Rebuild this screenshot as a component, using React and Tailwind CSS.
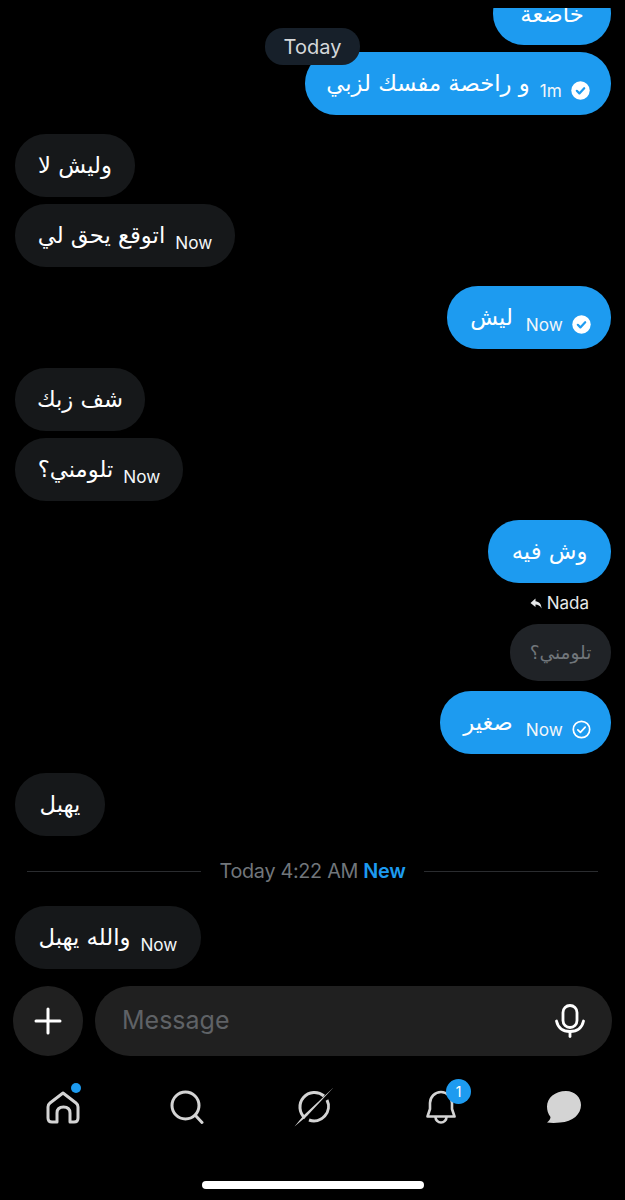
const ar = { fontFamily: '"DejaVu Sans", sans-serif' };
const la = { fontFamily: 'Inter, "Liberation Sans", sans-serif' };

function Check({ filled }) {
  if (filled)
    return (
      <svg width="19" height="19" viewBox="0 0 19 19" className="shrink-0">
        <circle cx="9.5" cy="9.5" r="9.2" fill="#fff" />
        <path d="M5.8 9.8l2.6 2.6 4.8-5.2" fill="none" stroke="#1d9bf0" strokeWidth="2.2" strokeLinecap="round" strokeLinejoin="round" />
      </svg>
    );
  return (
    <svg width="19" height="19" viewBox="0 0 19 19" className="shrink-0">
      <circle cx="9.5" cy="9.5" r="8.2" fill="none" stroke="#fff" strokeWidth="1.7" />
      <path d="M5.8 9.8l2.6 2.6 4.8-5.2" fill="none" stroke="#fff" strokeWidth="1.7" strokeLinecap="round" strokeLinejoin="round" />
    </svg>
  );
}

function Bubble({ me, text, meta, check, mt, w, wide }) {
  return (
    <div className={`flex ${me ? "justify-end pr-[14px]" : "justify-start pl-[15px]"} ${mt}`}>
      <div
        className={`h-[63px] rounded-[31px] flex items-center justify-center text-white ${w} ${wide ? "pl-[3px]" : ""} ${me ? "bg-[#1d9bf0]" : "bg-[#16181a]"}`}
      >
        <span dir="rtl" style={ar} className="text-[22.7px] leading-[30px] whitespace-nowrap -mt-[2px]">{text}</span>
        {meta && (
          <span style={la} className={`text-[17.2px] leading-[20px] mt-[14px] text-[#f2f6f9] ${wide ? "ml-[13px]" : "ml-[10px]"}`}>{meta}</span>
        )}
        {check && (
          <span className="ml-[9px] mt-[14px] flex">
            <Check filled={check === "filled"} />
          </span>
        )}
      </div>
    </div>
  );
}

function NavIcons() {
  const c = "#d4d4d4";
  return (
    <div className="flex justify-between items-center pl-[46px] pr-[43px] mt-[30px] h-[42px]">
      <div className="relative w-[34px] h-[36px]">
        <svg width="34" height="36" viewBox="0 0 34 36" fill="none" stroke={c} strokeWidth="3" strokeLinejoin="round">
          <path d="M17 4 L30 14 Q32 15.5 32 18 V29 Q32 33 28 33 H24 V24 Q24 18 17.5 18 Q11 18 11 24 V33 H6 Q2 33 2 29 V18 Q2 15.5 4 14 Z" />
        </svg>
        <span className="absolute -top-[6px] right-[-1px] w-[10px] h-[10px] rounded-full bg-[#1d9bf0]" />
      </div>
      <svg width="34" height="36" viewBox="0 0 34 36" fill="none" stroke={c} strokeWidth="3" strokeLinecap="round">
        <circle cx="15.5" cy="16.5" r="13.5" />
        <path d="M25.5 26.5 L32 33.5" />
      </svg>
      <svg width="40" height="40" viewBox="0 0 40 40" fill="none">
        <path d="M11 31 A14.5 14.5 0 0 1 30 9" stroke={c} strokeWidth="3" />
        <path d="M33 13 A14.5 14.5 0 0 1 15 33" stroke={c} strokeWidth="3" />
        <path d="M0.5 39.5 L13 29 L39.5 0.5 L24 15 L10 28 Z" fill={c} />
      </svg>
      <div className="relative w-[30px] h-[36px] ml-[2px]">
        <svg width="30" height="36" viewBox="0 0 30 36" fill="none" stroke={c} strokeWidth="2.6" strokeLinejoin="round">
          <path d="M1.5 27.5 L4 20 V14 A11 11 0 0 1 26 14 V20 L28.5 27.5 Z" />
          <path d="M9.5 28 A5.5 5.5 0 0 0 20.5 28" />
        </svg>
        <span style={la} className="absolute -top-[10px] left-[20px] w-[25px] h-[25px] rounded-full bg-[#1d9bf0] text-white text-[14px] flex items-center justify-center">1</span>
      </div>
      <svg width="36" height="34" viewBox="0 0 36 34" fill={c}>
        <path d="M20 1 C29 1 35 7.5 35 15 C35 24 27 32 14 32.5 C10 33 5 33 1 32.5 C3 31 4.5 29 4.5 27 C2 24 1 20 1 16.5 C1 8 9 1 20 1 Z" />
      </svg>
    </div>
  );
}

export default function App() {
  return (
    <div className="relative w-[625px] h-[1200px] bg-black overflow-hidden">
      <div className="flex flex-col">
        <div className="mt-[8px] h-[37px] overflow-hidden flex justify-end pr-[14px]">
          <div className="w-[118px] h-[63px] -mt-[26px] rounded-[31px] bg-[#1d9bf0] flex items-center justify-center text-white">
            <span dir="rtl" style={ar} className="text-[22.7px] leading-[30px] whitespace-nowrap">خاضعة</span>
          </div>
        </div>
        <Bubble me text="و راخصة مفسك لزبي" meta="1m" check="filled" mt="mt-[7px]" w="w-[306px]" />
        <Bubble text="وليش لا" mt="mt-[19px]" w="w-[120px]" />
        <Bubble text="اتوقع يحق لي" meta="Now" mt="mt-[7px]" w="w-[220px]" />
        <Bubble me wide text="ليش" meta="Now" check="filled" mt="mt-[19px]" w="w-[164px]" />
        <Bubble text="شف زبك" mt="mt-[19px]" w="w-[130px]" />
        <Bubble text="تلومني؟" meta="Now" mt="mt-[7px]" w="w-[168px]" />
        <Bubble me text="وش فيه" mt="mt-[19px]" w="w-[123px]" />

        <div className="flex justify-end items-center pr-[36px] mt-[10px] h-[20px] text-[#e7e9ea]">
          <svg width="12" height="11" viewBox="0 0 12 11" fill="#e7e9ea" className="mr-[5px]">
            <path d="M5.5 0.5 L0.5 5 L5.5 9 V6.5 C8 6.5 10 7.5 11.5 10.5 C11.5 6 9 3.5 5.5 3.2 Z" />
          </svg>
          <span style={la} className="text-[17px] leading-[20px]">Nada</span>
        </div>
        <div className="flex justify-end pr-[14px] mt-[11px]">
          <div className="w-[101px] h-[57px] rounded-[28px] bg-[#202327] flex items-center justify-center">
            <span dir="rtl" style={ar} className="text-[18.5px] leading-[28px] text-[#71767b]">تلومني؟</span>
          </div>
        </div>
        <Bubble me wide text="صغير" meta="Now" check="outline" mt="mt-[10px]" w="w-[171px]" />
        <Bubble text="يهبل" mt="mt-[19px]" w="w-[90px]" />

        <div className="flex items-center pl-[27px] pr-[27px] mt-[23px] h-[24px]">
          <div className="flex-1 h-px bg-[#2a2c2f]" />
          <div style={la} className="text-[19.8px] leading-[24px] px-[19px] whitespace-nowrap tracking-[-0.3px] text-[#71767b]">
            Today 4:22 AM <span className="font-semibold text-[#1d9bf0]">New</span>
          </div>
          <div className="flex-1 h-px bg-[#2a2c2f]" />
        </div>

        <Bubble text="والله يهبل" meta="Now" mt="mt-[23px]" w="w-[186px]" />

        <div className="flex items-center pl-[13px] pr-[13px] mt-[17px] gap-[12px]">
          <div className="w-[70px] h-[70px] rounded-full bg-[#202020] flex items-center justify-center shrink-0">
            <svg width="28" height="28" viewBox="0 0 28 28" stroke="#fff" strokeWidth="3" strokeLinecap="round">
              <path d="M14 2 V26 M2 14 H26" />
            </svg>
          </div>
          <div className="flex-1 h-[70px] rounded-[35px] bg-[#202020] flex items-center justify-between pl-[27px] pr-[27px]">
            <span style={la} className="text-[25px] text-[#5f6266]">Message</span>
            <svg width="30" height="34" viewBox="0 0 30 34" fill="none" stroke="#fff" strokeWidth="2.8" strokeLinecap="round">
              <rect x="8" y="1.5" width="14" height="22" rx="7" />
              <path d="M1.5 17 C3 24 8 27.5 15 27.5 C22 27.5 27 24 28.5 17" />
              <path d="M15 28 V32.5" />
            </svg>
          </div>
        </div>

        <NavIcons />

        <div className="flex justify-center mt-[53px]">
          <div className="w-[222px] h-[8px] rounded-full bg-white" />
        </div>
      </div>

      <div style={la} className="absolute top-[28px] left-[265px] w-[95px] h-[37px] rounded-[18px] bg-[#17202a] text-[#d5d8da] text-[20px] flex items-center justify-center">
        Today
      </div>
    </div>
  );
}
